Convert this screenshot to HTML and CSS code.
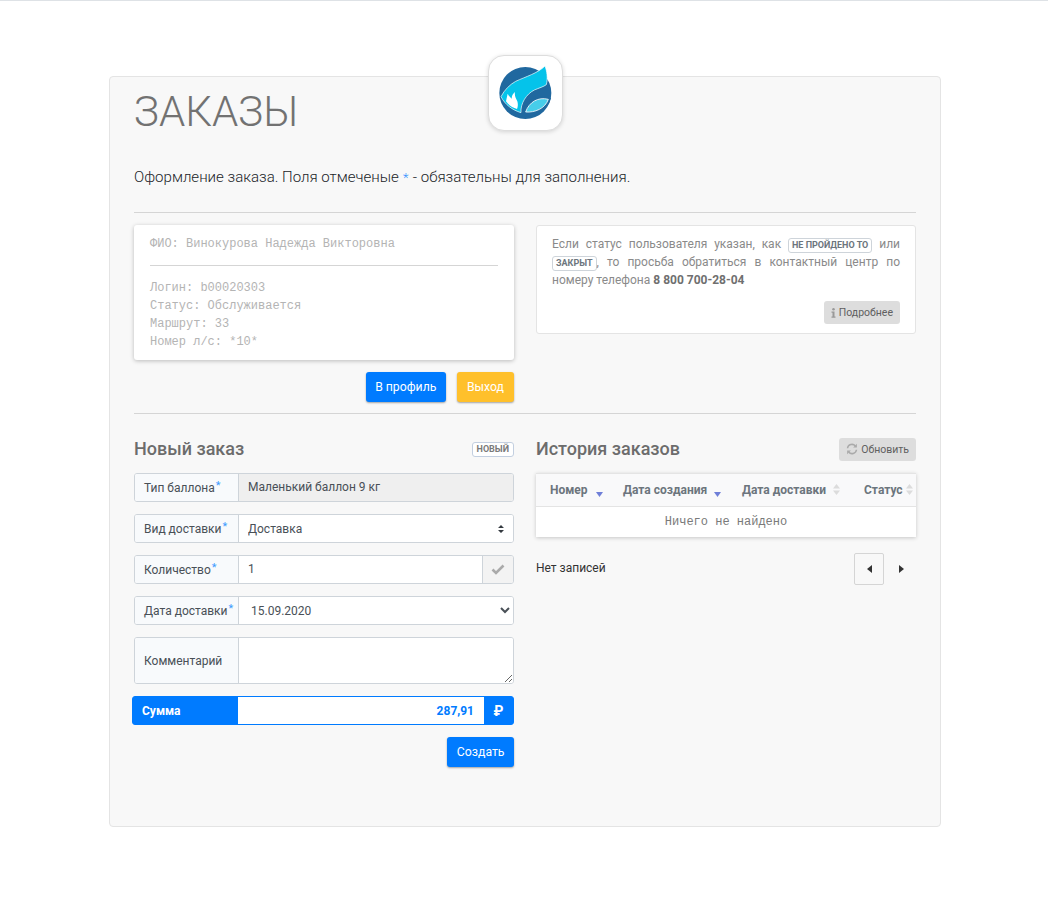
FILE: index.html
```html
<!DOCTYPE html>
<html lang="ru">
<head>
<meta charset="utf-8">
<title>Заказы</title>
<link rel="stylesheet" href="styles.css">
</head>
<body>
<main class="panel">
  <div class="logo">
    <svg viewBox="-21 -21 225 228" width="75" height="76">
      <circle cx="91" cy="93" r="78" fill="#20689f"/>
      <path d="M150 12C128 34 92 44 62 58C44 68 28 84 18 104C30 128 52 144 78 152C76 124 94 96 118 84C132 78 146 74 154 68C159 48 156 28 150 12Z" fill="#05c3ea" stroke="#fff" stroke-width="2"/>
      <path d="M168 108C130 94 88 112 80 154C118 160 158 148 168 108Z" fill="#20689f"/>
      <path d="M160 112C130 104 102 120 92 150C120 152 150 140 160 112Z" fill="#47cdea" stroke="#fff" stroke-width="2.500"/>
      <path d="M33 118C35 110 36 102 38 95C42 103 46 106 50 110C50 102 53 96 60 90C58 100 62 108 67 118C70 128 68 136 66 141C52 137 40 128 33 118Z" fill="#fff"/>
    </svg>
  </div>
  <h1 class="title">ЗАКАЗЫ</h1>
  <p class="lead">Оформление заказа. Поля отмеченые <span class="star-lead">*</span> - обязательны для заполнения.</p>
  <hr class="rule rule-top">
  <section class="columns">
    <div class="col">
      <div class="profile">
        <div class="mono">ФИО: Винокурова Надежда Викторовна</div>
        <hr class="rule rule-inner">
        <div class="mono">Логин: b00020303</div>
        <div class="mono">Статус: Обслуживается</div>
        <div class="mono">Маршрут: 33</div>
        <div class="mono">Номер л/с: *10*</div>
      </div>
      <div class="actions">
        <button class="btn btn-blue" type="button">В профиль</button>
        <button class="btn btn-yellow" type="button">Выход</button>
      </div>
    </div>
    <div class="col">
      <div class="notice">
        <p class="notice-text">Если статус пользователя указан, как <span class="tag">НЕ ПРОЙДЕНО ТО</span> или <span class="tag">ЗАКРЫТ</span>, то просьба обратиться в контактный центр по номеру телефона <b>8 800 700-28-04</b></p>
        <div class="notice-foot">
          <button class="btn-gray" type="button">
            <svg viewBox="0 0 6 12" width="5" height="10"><circle cx="3" cy="1.600" r="1.500" fill="#999"/><path d="M.6 4.200h3.600v6h1.200v1.400H.6v-1.400h1.200V5.600H.6z" fill="#999"/></svg>
            Подробнее
          </button>
        </div>
      </div>
    </div>
  </section>
  <hr class="rule rule-mid">
  <section class="columns">
    <form class="col form">
      <div class="head">
        <h2 class="heading">Новый заказ</h2>
        <span class="tag tag-new">НОВЫЙ</span>
      </div>
      <div class="group">
        <label class="addon">Тип баллона<span class="star">*</span></label>
        <div class="field field-off">Маленький баллон 9 кг</div>
      </div>
      <div class="group">
        <label class="addon">Вид доставки<span class="star">*</span></label>
        <select class="field select-custom"><option>Доставка</option></select>
      </div>
      <div class="group">
        <label class="addon">Количество<span class="star">*</span></label>
        <input class="field field-input" type="text" value="1">
        <span class="check">
          <svg viewBox="0 0 14 11" width="14" height="11"><path d="M1.500 5.500 5 9l7.500-7.500" fill="none" stroke="#aaa" stroke-width="2.600"/></svg>
        </span>
      </div>
      <div class="group">
        <label class="addon">Дата доставки<span class="star">*</span></label>
        <select class="field select-native"><option>15.09.2020</option></select>
      </div>
      <div class="group group-area">
        <label class="addon">Комментарий</label>
        <textarea class="field area"></textarea>
      </div>
      <div class="sum">
        <span class="sum-label">Сумма</span>
        <output class="sum-value">287,91</output>
        <span class="sum-cur">₽</span>
      </div>
      <div class="form-foot">
        <button class="btn btn-blue" type="button">Создать</button>
      </div>
    </form>
    <div class="col">
      <div class="head">
        <h2 class="heading">История заказов</h2>
        <button class="btn-gray" type="button">
          <svg viewBox="0 0 16 16" width="12" height="12"><path d="M2 7a6 6 0 0 1 10.500-3M14 9a6 6 0 0 1-10.500 3" fill="none" stroke="#aaa" stroke-width="2"/><path d="M14.500 1v5h-5zM1.500 15v-5h5z" fill="#aaa"/></svg>
          Обновить
        </button>
      </div>
      <div class="table-wrap">
        <table class="table">
          <thead>
            <tr>
              <th class="c1">Номер<svg class="sort sort-on" viewBox="0 0 7 5" width="7" height="5"><path d="M0 0h7L3.500 5z"/></svg></th>
              <th class="c2">Дата создания<svg class="sort sort-on sort-tight" viewBox="0 0 7 5" width="7" height="5"><path d="M0 0h7L3.500 5z"/></svg></th>
              <th class="c3">Дата доставки<svg class="sort sort-off" viewBox="0 0 7 11" width="7" height="11"><path d="M0 4.500h7L3.500 0zM0 6.500h7L3.500 11z"/></svg></th>
              <th class="c4">Статус<svg class="sort sort-off sort-near" viewBox="0 0 7 11" width="7" height="11"><path d="M0 4.500h7L3.500 0zM0 6.500h7L3.500 11z"/></svg></th>
            </tr>
          </thead>
          <tbody>
            <tr><td class="empty" colspan="4"><span class="empty-text">Ничего не найдено</span></td></tr>
          </tbody>
        </table>
      </div>
      <div class="pager-row">
        <span class="records">Нет записей</span>
        <div class="pager">
          <button class="page page-box" type="button"><svg viewBox="0 0 5 8" width="5" height="8"><path d="M5 0v8L0 4z"/></svg></button>
          <button class="page" type="button"><svg viewBox="0 0 5 8" width="5" height="8"><path d="M0 0v8l5-4z"/></svg></button>
        </div>
      </div>
    </div>
  </section>
</main>
</body>
</html>
```
FILE: styles.css
```css
* { box-sizing: border-box; }
html, body { margin: 0; padding: 0; }
body {
  background: #fff;
  border-top: 1px solid #dee2e6;
  font-family: Roboto, "Liberation Sans", sans-serif;
  font-size: 12px;
  color: #212529;
  min-height: 922px;
  padding-top: 75px;
}
.panel {
  position: relative;
  width: 832px;
  height: 751px;
  margin-left: 109px;
  padding: 0 24px;
  background: #f8f8f8;
  border: 1px solid #e4e4e4;
  border-radius: 4px;
}
.logo {
  position: absolute;
  left: 378px;
  top: -22px;
  width: 75px;
  height: 76px;
  background: #fff;
  border: 1px solid #ddd;
  border-radius: 16px;
  box-shadow: 0 1px 4px rgba(0, 0, 0, .15);
  overflow: hidden;
}
.logo svg { display: block; margin: -1px; }
.title {
  margin: 6px 0 0;
  font-size: 42px;
  line-height: 58px;
  font-weight: 300;
  color: #727272;
}
.lead {
  margin: 25px 0 0;
  font-size: 15.060px;
  line-height: 22px;
  font-weight: 300;
  color: #212529;
}
.star-lead { color: #2f8fff; font-size: 13px; line-height: 0; padding: 0 .5px; }
.star { color: #3d9bff; font-size: 11px; }
.rule { border: 0; border-top: 1px solid #d5d5d5; margin: 0; }
.rule-top { margin-top: 24px; }
.rule-mid { margin-top: 11px; }
.rule-inner { margin: 12px 0 13px; }
.columns { display: flex; gap: 22px; }
.col { width: 380px; flex: none; }
.profile {
  margin-top: 12px;
  height: 135px;
  padding: 10px 16px 0 16px;
  background: #fff;
  border-radius: 3px;
  box-shadow: 0 1px 4px rgba(0, 0, 0, .25);
}
.mono {
  font-family: "Liberation Mono", monospace;
  font-size: 12px;
  line-height: 18px;
  color: #b4b4b4;
}
.actions {
  display: flex;
  justify-content: flex-end;
  gap: 11px;
  margin-top: 12px;
}
.btn {
  height: 30px;
  padding: 0 10px;
  border: 0;
  border-radius: 3px;
  font: 400 12.250px Roboto, sans-serif;
  color: #fff;
  box-shadow: 0 1px 2px rgba(0, 0, 0, .35);
}
.btn-blue { background: #007bff; padding: 0 9.500px; }
.btn-yellow { background: #ffc02b; }
.notice {
  margin-top: 12px;
  height: 109px;
  padding: 9px 15px 0;
  background: #fff;
  border: 1px solid #e4e4e4;
  border-radius: 3px;
}
.notice-text {
  margin: 0;
  font-size: 12px;
  line-height: 18px;
  color: #8a8a8a;
  text-align: justify;
}
.notice-text b { color: #6f6f6f; font-weight: 700; }
.tag {
  display: inline-block;
  margin: -1px 0;
  padding: 0 3px;
  font-size: 9px;
  line-height: 13px;
  font-weight: 700;
  color: #6c757d;
  background: #fff;
  border: 1px solid #ced4da;
  border-radius: 3px;
}
.notice-foot { display: flex; justify-content: flex-end; margin-top: 12px; }
.btn-gray {
  display: inline-flex;
  align-items: center;
  gap: 3px;
  height: 23px;
  padding: 0 7px;
  border: 0;
  border-radius: 3px;
  background: #dddddd;
  font: 400 10.500px Roboto, sans-serif;
  color: #606060;
}
.head {
  display: flex;
  justify-content: space-between;
  align-items: center;
  height: 26px;
  margin-top: 22px;
  margin-bottom: 11px;
}
.heading {
  margin: 0 0 2px;
  font-size: 18px;
  font-weight: 500;
  color: #6c6c6c;
}
.tag-new { color: #7a7a7a; border-color: #c3cfe0; padding: 0 4px; }
.group {
  display: flex;
  height: 29px;
  margin-bottom: 12px;
  background: #fff;
  border: 1px solid #ced4da;
  border-radius: 3px;
  overflow: hidden;
}
.addon {
  flex: none;
  display: flex;
  align-items: center;
  width: 104px;
  padding-left: 9px;
  background: #f8fafc;
  border-right: 1px solid #ced4da;
  font-size: 12px;
  color: #495057;
}
.addon .star { align-self: flex-start; margin: 5px 0 0 1px; }
.field {
  flex: 1;
  min-width: 0;
  height: 100%;
  padding: 0 9px;
  border: 0;
  outline: 0;
  background: #fff;
  font: 400 12px Roboto, sans-serif;
  color: #495057;
}
.field-off { display: flex; align-items: center; background: #efefef; padding-bottom: 2px; }
.field-input { padding-bottom: 2px; }
.select-custom {
  appearance: none;
  background: #fff url("data:image/svg+xml,%3Csvg xmlns='http://www.w3.org/2000/svg' width='6' height='8'%3E%3Cpath d='M0 3 3 0l3 3zM0 5l3 3 3-3z' fill='%23343a40'/%3E%3C/svg%3E") no-repeat right 9px center;
}
.select-native { padding: 0 0 0 8px; }
.check {
  flex: none;
  display: flex;
  align-items: center;
  justify-content: center;
  width: 31px;
  background: #f3f3f3;
  border-left: 1px solid #ced4da;
}
.group-area { height: 47px; }
.area { display: block; resize: vertical; }
.sum {
  display: flex;
  height: 29px;
  background: #007bff;
  border: 1px solid #007bff;
  border-radius: 3px;
  margin-left: -2px;
  color: #fff;
  font-weight: 700;
}
.sum-label {
  width: 105px;
  flex: none;
  display: flex;
  align-items: center;
  padding-left: 9px;
  font-size: 12px;
}
.sum-value {
  flex: 1;
  display: flex;
  align-items: center;
  justify-content: flex-end;
  padding-right: 10px;
  background: #fff;
  color: #007bff;
  font-size: 12px;
}
.sum-cur {
  width: 29px;
  flex: none;
  display: flex;
  align-items: center;
  justify-content: center;
  font-size: 14px;
}
.form-foot { display: flex; justify-content: flex-end; margin-top: 12px; }
.table-wrap {
  height: 64px;
  overflow: hidden;
  background: #fff;
  box-shadow: 0 1px 4px rgba(0, 0, 0, .2);
  border-top: 1px solid #e4e4e4;
}
.table { width: 380px; border-collapse: collapse; table-layout: fixed; }
.table th {
  height: 32px;
  padding: 0;
  background: #f9f9fa;
  border-bottom: 1px solid #e4e4e4;
  font-size: 12px;
  font-weight: 700;
  color: #6c757d;
  text-align: left;
  white-space: nowrap;
}
.c1 { width: 87px; padding-left: 14px !important; }
.c2 { width: 119px; }
.c3 { width: 122px; }
.c4 { width: 52px; }
.sort { display: inline-block; margin-left: 8px; fill: #dcdcdc; }
.sort-on { fill: #6f7fd8; vertical-align: -3px; }
.sort-tight { margin-left: 7px; }
.sort-off { margin-left: 7px; vertical-align: -1px; }
.sort-near { margin-left: 3px; }
.empty { height: 31px; text-align: center; }
.empty-text { font-family: "Liberation Mono", monospace; font-size: 12px; color: #7a7a7a; }
.pager-row {
  display: flex;
  justify-content: space-between;
  align-items: center;
  margin-top: 16px;
}
.records { font-size: 12px; color: #333; padding-bottom: 2px; }
.pager { display: flex; gap: 2px; }
.page {
  display: flex;
  align-items: center;
  justify-content: center;
  width: 30px;
  height: 32px;
  padding: 0;
  background: transparent;
  border: 1px solid transparent;
  border-radius: 2px;
  fill: #333;
}
.page-box { border-color: #d5d5d5; background: #f8f8f8; }
```
